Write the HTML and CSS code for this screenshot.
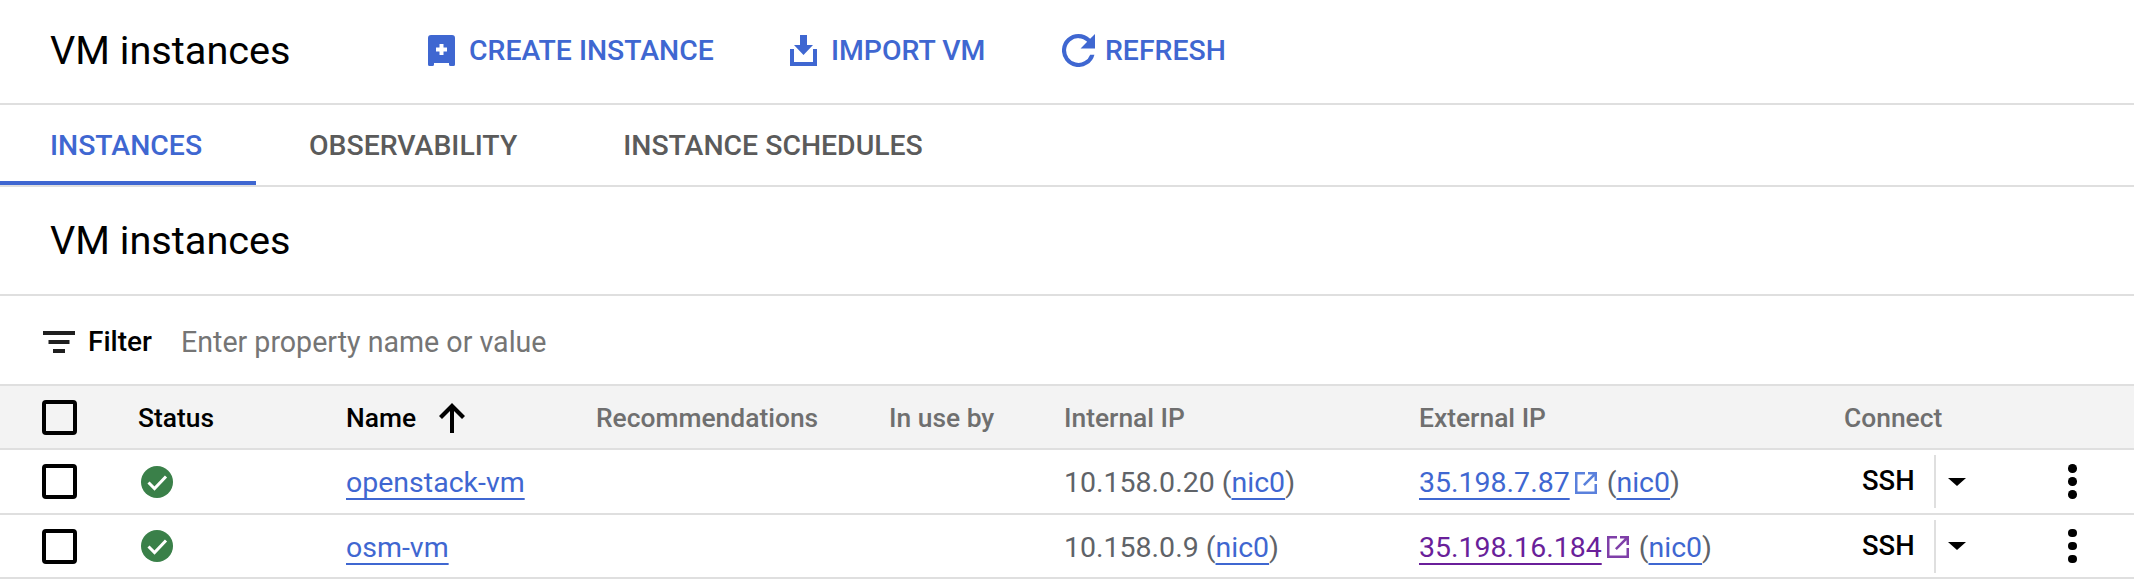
FILE: index.html
```html
<!DOCTYPE html>
<html lang="en">
<head>
  <meta charset="UTF-8" />
  <title>VM instances</title>
  <link rel="stylesheet" href="styles.css">
</head>
<body>
  <div class="toolbar">
    <h1 class="page-title">VM instances</h1>
    <a class="action action-create">
      <svg class="action-icon" viewBox="0 0 27 31"><path fill-rule="evenodd" d="M3 0h21a3 3 0 0 1 3 3v26.500a1.500 1.500 0 0 1-1.500 1.500h-3a1.500 1.500 0 0 1-1.500-1.500V28H6v1.500A1.500 1.500 0 0 1 4.500 31h-3A1.500 1.500 0 0 1 0 29.500V3a3 3 0 0 1 3-3zm8.500 9v3.500H8v4h3.500V20h4v-3.500H19v-4h-3.500V9z"/></svg>
      CREATE INSTANCE
    </a>
    <a class="action action-import">
      <svg class="action-icon" viewBox="0 0 27 31"><path d="M10 0h7v10h6L13.500 20 4 10h6zM0 14h4v13h19V14h4v17H0z"/></svg>
      IMPORT VM
    </a>
    <a class="action action-refresh">
      <svg class="action-icon refresh-icon" viewBox="4 4 16 16"><path d="M17.650 6.350A7.960 7.960 0 0 0 12 4a8 8 0 1 0 7.730 10h-2.080A6 6 0 1 1 12 6c1.660 0 3.140.690 4.220 1.780L13 11h7V4l-2.350 2.350z"/></svg>
      REFRESH
    </a>
  </div>

  <div class="tabs">
    <div class="tab tab-active">INSTANCES</div>
    <div class="tab">OBSERVABILITY</div>
    <div class="tab">INSTANCE SCHEDULES</div>
  </div>

  <div class="section-head">
    <h2 class="page-title">VM instances</h2>
  </div>

  <div class="filter">
    <svg class="filter-icon" viewBox="0 0 32 22"><path d="M0 0h32v4H0zM5.500 9h21v4h-21zM10 18h12v4H10z"/></svg>
    <span class="filter-label">Filter</span>
    <span class="filter-hint">Enter property name or value</span>
  </div>

  <div class="row row-head">
    <div><span class="checkbox"></span></div>
    <div class="head-dark">Status</div>
    <div class="head-dark head-name">Name
      <svg class="sort-icon" viewBox="0 0 26 30"><path d="M13 0l13 13-3 3-8-8v22h-4V8l-8 8-3-3z"/></svg>
    </div>
    <div>Recommendations</div>
    <div>In use by</div>
    <div>Internal IP</div>
    <div>External IP</div>
    <div>Connect</div>
  </div>

  <div class="row">
    <div><span class="checkbox"></span></div>
    <div><svg class="status-icon" viewBox="0 0 32 32"><circle cx="16" cy="16" r="16" fill="#3a8049"/><path d="M7.500 16.500l6 6L25 10.500" fill="none" stroke="#fff" stroke-width="3"/></svg></div>
    <div class="cell-text"><a class="link">openstack-vm</a></div>
    <div></div>
    <div></div>
    <div class="cell-text">10.158.0.20 (<a class="link">nic0</a>)</div>
    <div class="external cell-text">
      <a class="link">35.198.7.87</a>
      <svg class="open-icon" viewBox="0 0 22 22"><path d="M0 0h10v2.500H2.500v17h17V12H22v10H0zM13 0h9v9h-2.500V4.300L9.800 14 8 12.200 17.700 2.500H13z"/></svg>
      <span>(<a class="link">nic0</a>)</span>
    </div>
    <div class="connect">
      <span class="ssh">SSH</span>
      <span class="caret"></span>
      <span class="dots"><i></i><i></i><i></i></span>
    </div>
  </div>

  <div class="row row-last">
    <div><span class="checkbox"></span></div>
    <div><svg class="status-icon" viewBox="0 0 32 32"><circle cx="16" cy="16" r="16" fill="#3a8049"/><path d="M7.500 16.500l6 6L25 10.500" fill="none" stroke="#fff" stroke-width="3"/></svg></div>
    <div class="cell-text"><a class="link">osm-vm</a></div>
    <div></div>
    <div></div>
    <div class="cell-text">10.158.0.9 (<a class="link">nic0</a>)</div>
    <div class="external cell-text">
      <a class="link visited">35.198.16.184</a>
      <svg class="open-icon visited" viewBox="0 0 22 22"><path d="M0 0h10v2.500H2.500v17h17V12H22v10H0zM13 0h9v9h-2.500V4.300L9.800 14 8 12.200 17.700 2.500H13z"/></svg>
      <span>(<a class="link">nic0</a>)</span>
    </div>
    <div class="connect">
      <span class="ssh">SSH</span>
      <span class="caret"></span>
      <span class="dots"><i></i><i></i><i></i></span>
    </div>
  </div>
</body>
</html>
```

FILE: styles.css
```css
body {
  margin: 0;
  font-family: Roboto, "Liberation Sans", sans-serif;
  color: #5f6368;
  background: #fff;
}
.toolbar {
  box-sizing: border-box;
  display: flex;
  align-items: center;
  height: 105px;
  padding: 0 0 3px 50px;
  border-bottom: 2px solid #dfdfdf;
}
.page-title {
  margin: 0;
  font-size: 39.700px;
  font-weight: 400;
  color: #000;
}
.toolbar .page-title {
  width: 378px;
}
.action {
  display: flex;
  align-items: center;
  font-size: 28.400px;
  font-weight: 500;
  color: #3f67d1;
}
.action-icon {
  width: 27px;
  height: 31px;
  margin-right: 14px;
  fill: #3f67d1;
}
.refresh-icon {
  width: 33px;
  height: 33px;
  margin-right: 10px;
}
.action-create {
  width: 362px;
}
.action-import {
  width: 272px;
}
.tabs {
  display: flex;
  height: 80px;
  border-bottom: 2px solid #dfdfdf;
}
.tab {
  display: flex;
  align-items: center;
  padding: 0 53px;
  font-size: 28.400px;
  font-weight: 500;
  color: #5b5b5b;
}
.tab-active {
  box-sizing: border-box;
  width: 256px;
  padding: 4px 0 0 50px;
  color: #3f67d1;
  border-bottom: 4px solid #3f67d1;
}
.section-head {
  display: flex;
  align-items: center;
  height: 107px;
  padding-left: 50px;
  border-bottom: 2px solid #dfdfdf;
}
.filter {
  display: flex;
  align-items: center;
  height: 88px;
  padding: 3px 0 0 43px;
  box-sizing: border-box;
}
.filter-icon {
  width: 32px;
  height: 22px;
  margin-right: 13px;
  fill: #1f1f1f;
}
.filter-label {
  width: 93px;
  font-size: 28px;
  font-weight: 500;
  color: #000;
}
.filter-hint {
  font-size: 28.600px;
  color: #757575;
}
.row {
  display: grid;
  grid-template-columns: 96px 208px 250px 293px 175px 355px 425px 1fr;
  align-items: center;
  height: 63px;
  padding-left: 42px;
  border-bottom: 2px solid #dfdfdf;
  font-size: 28.500px;
}
.row-head {
  height: 61px;
  padding-top: 1px;
  background: #f3f3f3;
  border-top: 2px solid #dfdfdf;
  font-size: 26.400px;
  font-weight: 500;
  color: #6f6f6f;
}
.row-last {
  height: 62px;
}
.head-dark {
  color: #000;
}
.head-name {
  display: flex;
  align-items: center;
}
.sort-icon {
  width: 26px;
  height: 30px;
  margin-left: 23px;
  fill: #000;
}
.cell-text {
  padding-top: 2px;
}
.checkbox {
  display: block;
  box-sizing: border-box;
  width: 35px;
  height: 35px;
  border: 4px solid #000;
  border-radius: 4px;
}
.status-icon {
  display: block;
  width: 32px;
  height: 32px;
  margin-left: 3px;
}
.link {
  color: #3f67d1;
  text-decoration: underline;
  text-decoration-thickness: 2px;
  text-underline-offset: 6px;
}
.link.visited {
  color: #6a1f9a;
}
.external {
  display: flex;
  align-items: center;
}
.open-icon {
  width: 22px;
  height: 22px;
  margin: 0 10px 0 5px;
  fill: #5a80dc;
}
.open-icon.visited {
  fill: #7f3fa8;
}
.connect {
  display: flex;
  align-items: center;
  height: 53px;
}
.ssh {
  box-sizing: border-box;
  width: 74px;
  margin-left: 18px;
  font-size: 27.400px;
  font-weight: 500;
  color: #000;
  line-height: 53px;
  border-right: 2px solid #dfdfdf;
}
.caret {
  display: block;
  width: 0;
  height: 0;
  margin-left: 12px;
  border-left: 9px solid transparent;
  border-right: 9px solid transparent;
  border-top: 8px solid #000;
}
.dots {
  display: flex;
  flex-direction: column;
  gap: 4.500px;
  margin-left: 102px;
}
.dots i {
  display: block;
  width: 8.500px;
  height: 8.500px;
  border-radius: 50%;
  background: #000;
}
```
